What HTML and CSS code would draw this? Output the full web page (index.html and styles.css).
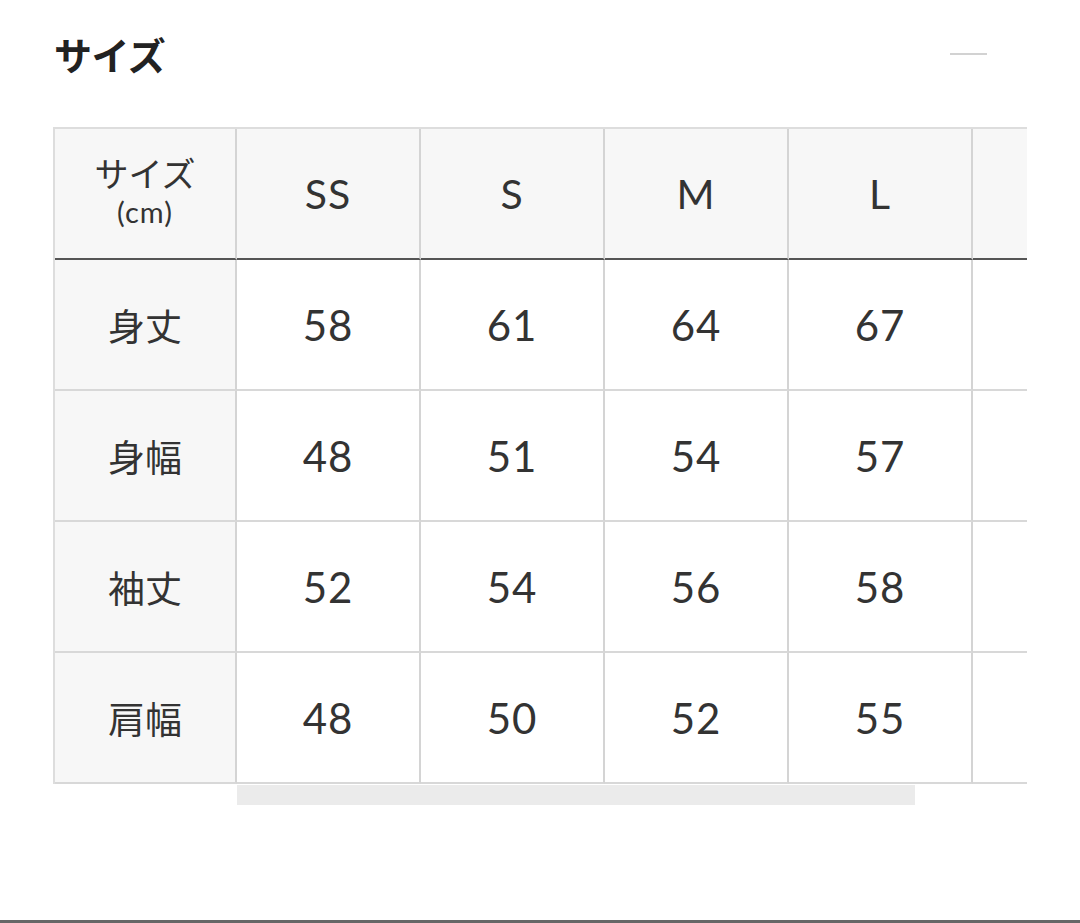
FILE: index.html
```html
<!DOCTYPE html>
<html lang="ja">
<head>
<meta charset="utf-8">
<link rel="stylesheet" href="styles.css">
</head>
<body>
<div class="page">
  <div class="title-row">
    <h2 class="title">サイズ</h2>
    <span class="dash"></span>
  </div>
  <div class="table-wrap">
    <div class="grid">
      <div class="cell head label"><span class="jp">サイズ</span><span class="cm">(cm)</span></div>
      <div class="cell head num">SS</div>
      <div class="cell head num">S</div>
      <div class="cell head num">M</div>
      <div class="cell head num">L</div>
      <div class="cell head num"></div>

      <div class="cell label jp">身丈</div>
      <div class="cell num">58</div>
      <div class="cell num">61</div>
      <div class="cell num">64</div>
      <div class="cell num">67</div>
      <div class="cell num"></div>

      <div class="cell label jp">身幅</div>
      <div class="cell num">48</div>
      <div class="cell num">51</div>
      <div class="cell num">54</div>
      <div class="cell num">57</div>
      <div class="cell num"></div>

      <div class="cell label jp">袖丈</div>
      <div class="cell num">52</div>
      <div class="cell num">54</div>
      <div class="cell num">56</div>
      <div class="cell num">58</div>
      <div class="cell num"></div>

      <div class="cell label jp">肩幅</div>
      <div class="cell num">48</div>
      <div class="cell num">50</div>
      <div class="cell num">52</div>
      <div class="cell num">55</div>
      <div class="cell num"></div>
    </div>
  </div>
  <div class="scrollbar"><div class="thumb"></div></div>
  <div class="bottom-line"></div>
</div>
</body>
</html>
```
FILE: styles.css
```css
html, body {
  margin: 0;
  padding: 0;
  background: #ffffff;
}
body {
  font-family: "Noto Sans CJK JP", "Noto Sans", sans-serif;
  color: #333333;
  width: 1080px;
  height: 923px;
  overflow: hidden;
}
.page {
  display: flex;
  flex-direction: column;
}
.title-row {
  display: flex;
  justify-content: space-between;
  align-items: center;
  padding: 32px 93px 0 54px;
  height: 44px;
}
.title {
  margin: 0;
  font-size: 38px;
  line-height: 44px;
  font-weight: 700;
  color: #222222;
  letter-spacing: -0.5px;
}
.dash {
  width: 37px;
  height: 2px;
  background: #d2d2d2;
}
.table-wrap {
  margin: 51px 0 0 53px;
  width: 974px;
  overflow: hidden;
}
.grid {
  display: grid;
  grid-template-columns: 182px repeat(5, 184px);
  grid-auto-rows: 131px;
  width: 1104px;
  border-top: 2px solid #dddddd;
  border-left: 2px solid #dddddd;
  box-sizing: border-box;
}
.cell {
  box-sizing: border-box;
  border-right: 2px solid #d4d4d4;
  border-bottom: 2px solid #d8d8d8;
  display: flex;
  align-items: center;
  justify-content: center;
  background: #ffffff;
}
.head {
  background: #f7f7f7;
  border-bottom: 2px solid #555555;
}
.label {
  background: #f7f7f7;
  flex-direction: column;
}
.head.label {
  gap: 2px;
  padding-bottom: 6px;
}
.head .jp {
  font-size: 34px;
  line-height: 40px;
  color: #333333;
}
.label.jp {
  font-size: 37px;
  line-height: 44px;
}
.cm {
  font-family: "Lato", "Noto Sans", sans-serif;
  font-size: 29px;
  line-height: 34px;
  letter-spacing: 1px;
}
.num {
  font-family: "Lato", "Noto Sans", sans-serif;
  font-size: 42px;
  font-weight: 400;
  color: #333333;
  letter-spacing: 1px;
}
.head.num {
  font-size: 41px;
}
.scrollbar {
  margin: 1px 0 0 237px;
  width: 678px;
  height: 20px;
}
.thumb {
  width: 100%;
  height: 100%;
  background: #ebebeb;
}
.bottom-line {
  margin-top: 115px;
  height: 3px;
  background: #666666;
}
```
